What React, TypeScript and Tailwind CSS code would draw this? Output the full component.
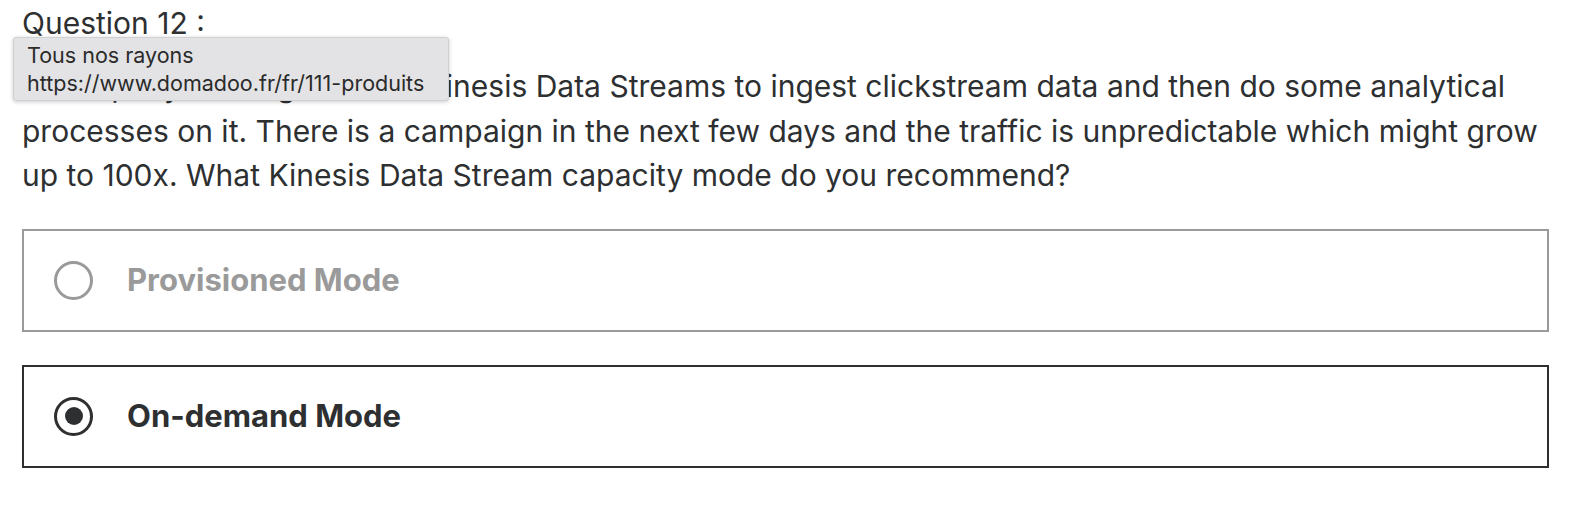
import React from "react";

export default function App() {
  const font = { fontFamily: "Inter, 'Noto Sans', sans-serif" };
  return (
    <div className="relative w-[1580px] h-[524px] bg-white text-[#2d2f31] overflow-hidden" style={font}>
      <div className="pl-[22px] pr-[20px]">
        <div className="text-[30px] leading-[45px] mt-[1px]">Question 12 :</div>
        <p className="text-[30px] leading-[44.5px] mt-[18px] whitespace-nowrap">
          <span className="block"><span className="[word-spacing:-1.3px]">A company is using Amazon </span>Kinesis Data Streams to ingest clickstream data and then do some analytical</span>
          <span className="block">processes on it. There is a campaign in the next few days and the traffic is unpredictable which might grow</span>
          <span className="block">up to 100x. What Kinesis Data Stream capacity mode do you recommend?</span>
        </p>
        <div className="mt-[31px] mr-[11px] flex flex-col gap-[33px]">
          <div className="h-[103px] border-2 border-[#9a9a9a] flex items-center pl-[30px]">
            <span className="w-[39px] h-[39px] rounded-full border-[3px] border-[#9a9a9a] shrink-0" />
            <span className="ml-[34px] text-[31px] font-bold text-[#9a9a9a]">Provisioned Mode</span>
          </div>
          <div className="h-[103px] border-2 border-[#2d2f31] flex items-center pl-[30px]">
            <span className="w-[39px] h-[39px] rounded-full border-[3px] border-[#2d2f31] shrink-0 flex items-center justify-center">
              <span className="w-[18px] h-[18px] rounded-full bg-[#2d2f31]" />
            </span>
            <span className="ml-[34px] text-[31px] font-bold">On-demand Mode</span>
          </div>
        </div>
      </div>
      <div className="absolute left-[13px] top-[37px] w-[436px] h-[64px] bg-[#e3e3e5] border border-[#d0d0d2] rounded-[3px] shadow-[0_1px_4px_rgba(0,0,0,0.2)] px-[13px] pt-[3px] text-[21.5px] leading-[28px] text-[#2a2a2a] whitespace-nowrap">
        <div>Tous nos rayons</div>
        <div>https://www.domadoo.fr/fr/111-produits</div>
      </div>
    </div>
  );
}
